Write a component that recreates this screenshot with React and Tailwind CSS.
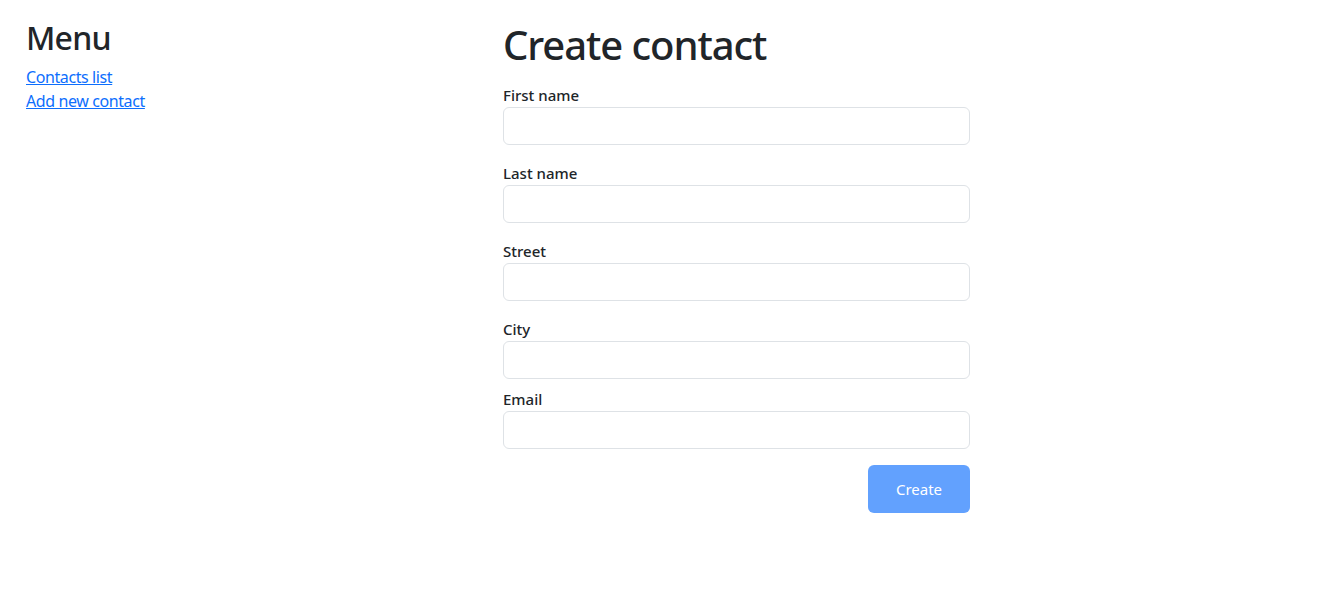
export default function App() {
  const fields = [
    { label: "First name", mb: "mb-[16px]" },
    { label: "Last name", mb: "mb-[16px]" },
    { label: "Street", mb: "mb-[16px]" },
    { label: "City", mb: "mb-[8px]" },
    { label: "Email", mb: "mb-[16px]" },
  ];
  return (
    <div
      className="flex min-h-[591px] w-full bg-white text-[#212529]"
      style={{ fontFamily: '"Noto Sans", "Open Sans", sans-serif' }}
    >
      <aside className="w-[503px] shrink-0 pl-[26px] pt-[19px]">
        <h2 className="mb-[8px] text-[32px] font-medium leading-[1.2] tracking-[-0.025em]">Menu</h2>
        <ul className="text-[16px] leading-[24px] tracking-[-0.025em]">
          <li>
            <a href="#" className="text-[#0d6efd] underline">Contacts list</a>
          </li>
          <li>
            <a href="#" className="text-[#0d6efd] underline">Add new contact</a>
          </li>
        </ul>
      </aside>
      <main className="w-[467px] pt-[21px]">
        <h1 className="mb-[14px] text-[40px] font-medium leading-[48px] tracking-[-0.027em]">Create contact</h1>
        <form onSubmit={(e) => e.preventDefault()}>
          {fields.map((f) => (
            <div key={f.label} className={f.mb}>
              <label className="block text-[15px] font-medium leading-[24px]">{f.label}</label>
              <input
                type="text"
                className="block h-[38px] w-full rounded-[6px] border border-[#dee2e6] bg-white px-3 text-[16px] outline-none"
              />
            </div>
          ))}
          <div className="flex justify-end">
            <button
              type="submit"
              disabled
              className="h-[48px] w-[102px] rounded-[6px] bg-[#62a1fe] text-[15px] text-white"
            >
              Create
            </button>
          </div>
        </form>
      </main>
    </div>
  );
}
